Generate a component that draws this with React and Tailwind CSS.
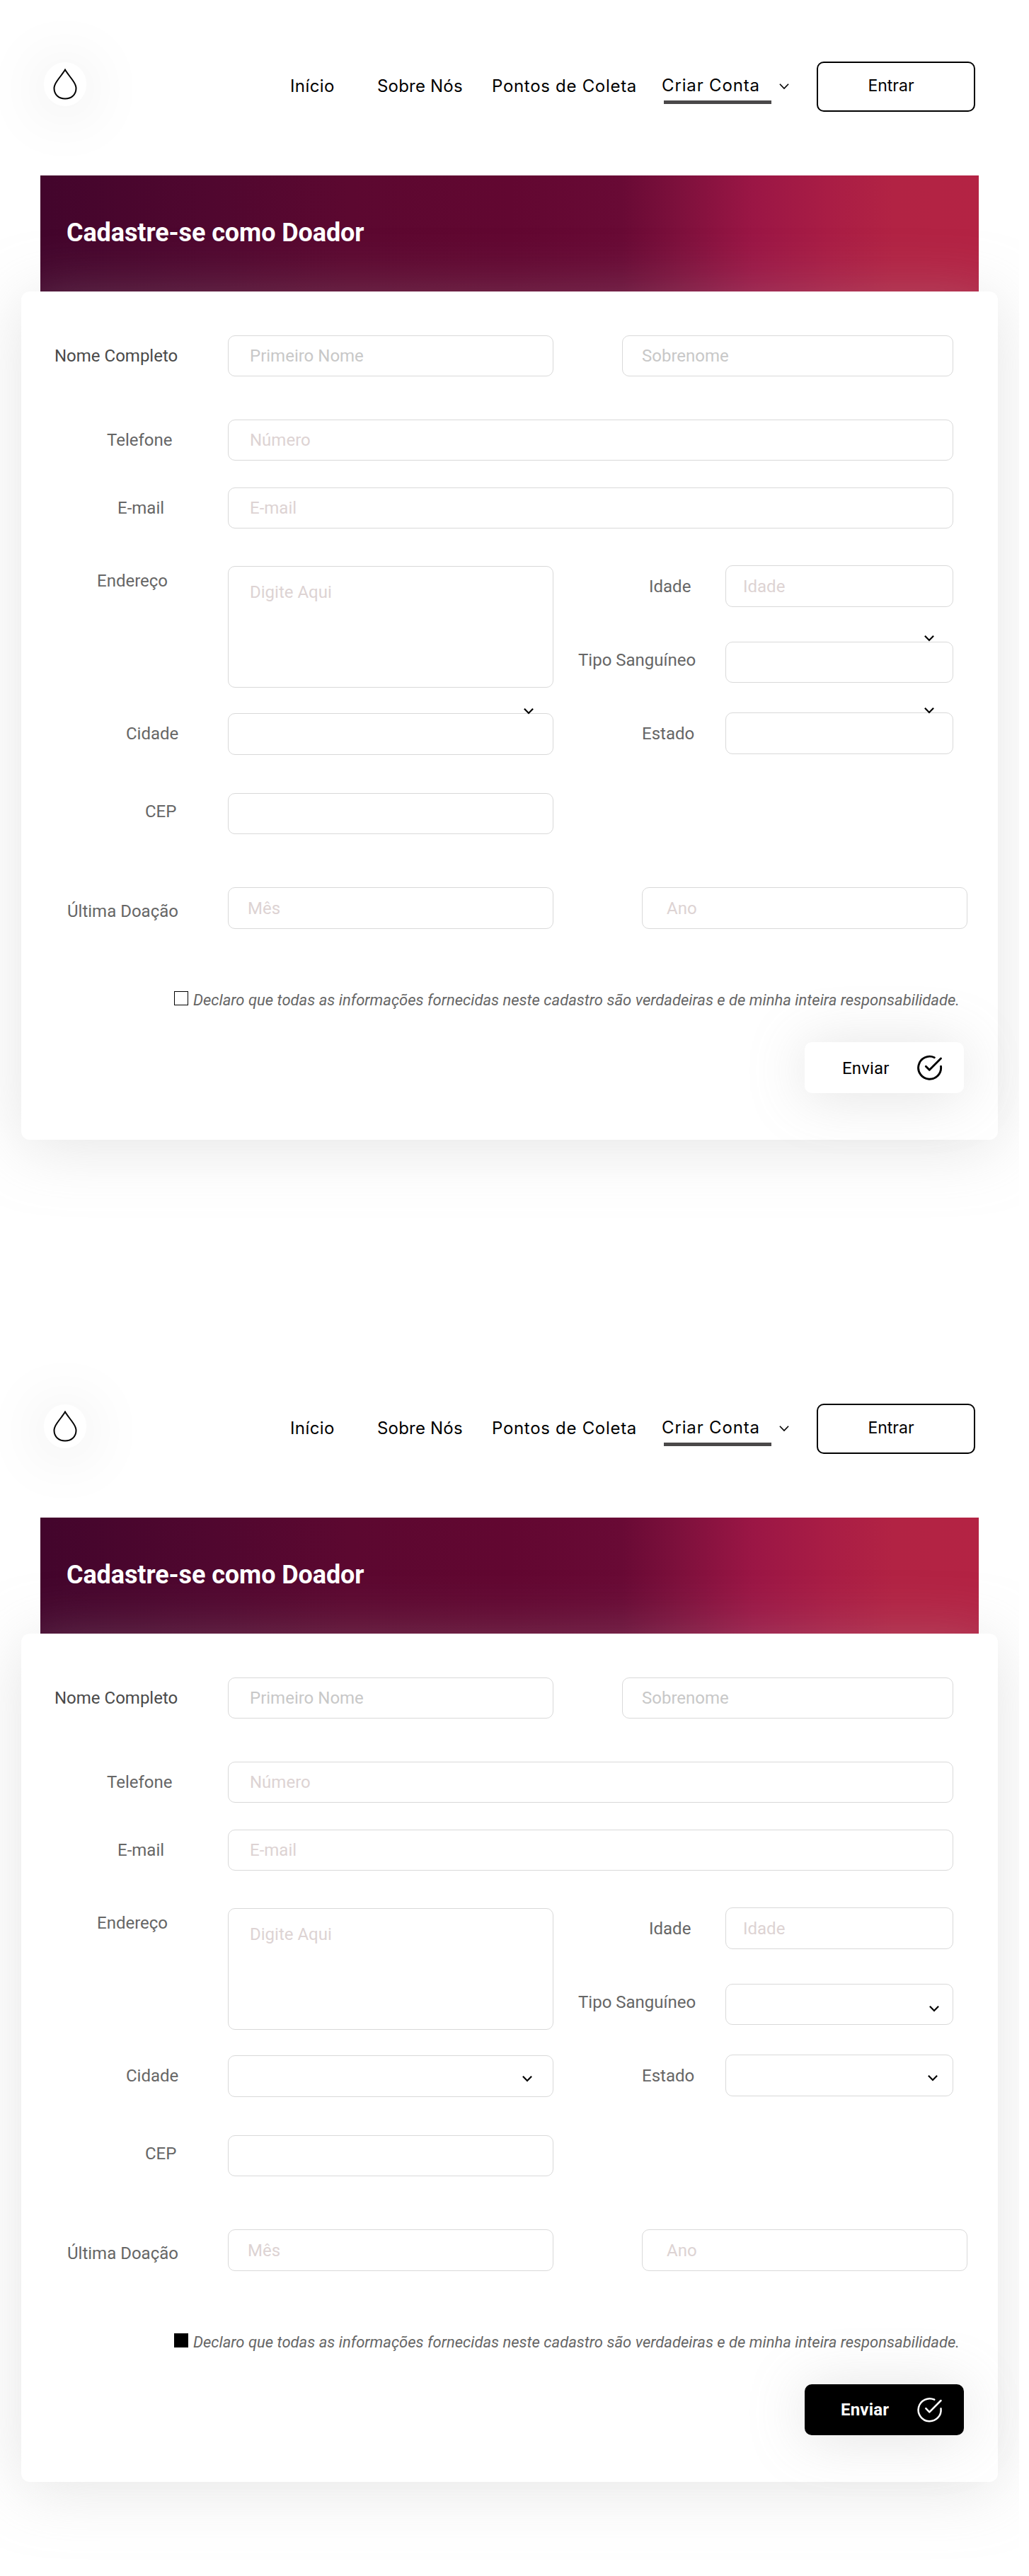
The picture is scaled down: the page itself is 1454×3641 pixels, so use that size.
const ROBOTO = "font-['Roboto',sans-serif]";

function Chevron({ className = "", width = 2.2 }) {
  return (
    <svg className={className} width="14" height="9" viewBox="0 0 14 9" fill="none" stroke="#000" strokeWidth={width}>
      <path d="M0.900 0.800L7 7L13.100 0.800" />
    </svg>
  );
}

function NavLink({ children, className }) {
  return <a className={`block whitespace-nowrap text-[24px] leading-[28px] text-black ${className}`}>{children}</a>;
}

function Header() {
  return (
    <header className="flex h-[248px] items-start font-['Inter',sans-serif]">
      <div className="mt-[88px] ml-[62px] flex h-[62px] w-[60px] shrink-0 items-center justify-center rounded-full bg-white shadow-[0_6px_90px_rgba(0,0,0,0.13)]">
        <svg width="34" height="44" viewBox="0 0 34 44" fill="none" stroke="#000" strokeWidth="2">
          <path d="M17 1.6C14.6 6 10 11 5.6 17.500C2.800 21.500 1.500 24 1.500 28C1.500 36.500 8 42.500 17 42.500S32.500 36.500 32.500 28C32.500 24 31.200 21.500 28.400 17.500C24 11 19.400 6 17 1.600Z" />
        </svg>
      </div>
      <nav className="flex items-start">
        <NavLink className="mt-[108px] ml-[288px] w-[123px] tracking-[0.4px]">Início</NavLink>
        <NavLink className="mt-[108px] w-[162px] tracking-[0.2px]">Sobre Nós</NavLink>
        <NavLink className="mt-[108px] w-[240px] tracking-[0.7px]">Pontos de Coleta</NavLink>
        <div className="mt-[107px] w-[155px]">
          <NavLink className="tracking-[0.85px]">Criar Conta</NavLink>
          <div className="mt-[7px] ml-[3px] h-[5px] w-[152px] bg-[#4a4849]" />
        </div>
        <Chevron className="mt-[118px] ml-[11px]" width={1.6} />
      </nav>
      <a className="mt-[87px] ml-[39px] flex h-[71px] w-[224px] shrink-0 justify-center rounded-[10px] border-2 border-black pt-[18px] text-[23px] leading-[28px] text-black">
        <span className="-ml-[14px]">Entrar</span>
      </a>
    </header>
  );
}

function Label({ children, className = "", tone = "text-[#666666]" }) {
  return (
    <label className={`block shrink-0 whitespace-nowrap text-[24px] leading-[28px] ${tone} ${className}`}>{children}</label>
  );
}

function Field({ children, className = "", tone = "text-[#ddd3d3]" }) {
  return (
    <div className={`relative shrink-0 whitespace-nowrap rounded-[10px] border border-[#d9d9d9] text-[24px] leading-[28px] ${tone} ${className}`}>
      {children}
    </div>
  );
}

function Submit({ filled }) {
  return (
    <button
      className={
        filled
          ? "mt-[47px] ml-[1107px] flex h-[72px] w-[225px] rounded-[10px] bg-black pl-[51px] font-bold text-white shadow-[0_4px_80px_rgba(150,150,150,0.28)]"
          : "mt-[47px] ml-[1107px] flex h-[72px] w-[225px] rounded-[10px] bg-white pl-[53px] text-black shadow-[0_4px_80px_rgba(150,150,150,0.28)]"
      }
    >
      <span className={filled ? "mt-[22px] block w-[106px] text-left text-[24px] leading-[28px] tracking-[0.2px]" : "mt-[23px] block w-[104px] text-left text-[24px] leading-[28px] tracking-[0.15px]"}>
        Enviar
      </span>
      <svg className="mt-[17px] shrink-0" width="38" height="38" viewBox="0 0 38 38" fill="none" stroke="currentColor" strokeWidth={filled ? 2.5 : 2.9} strokeLinecap="round" strokeLinejoin="round">
        <path d="M26.300 4.700A16 16 0 1 0 35.500 17.300" />
        <path d="M14.300 17.200L19.300 22.300L35.500 6" />
      </svg>
    </button>
  );
}

function SignupForm({ filled }) {
  return (
    <form className={`ml-[30px] flex h-[1199px] w-[1380px] flex-col rounded-[12px] bg-white shadow-[0_10px_90px_rgba(180,180,180,0.34)] ${ROBOTO}`}>
      <div className="mt-[62px] flex items-start">
        <Label className="mt-[15px] w-[292px] pl-[47px]" tone="text-[#4a4a4a]">Nome Completo</Label>
        <Field className="h-[58px] w-[460px] pt-[14px] pl-[30px]" tone="text-[#c8c8c8]">Primeiro Nome</Field>
        <Field className="ml-[97px] h-[58px] w-[468px] pt-[14px] pl-[27px]" tone="text-[#c8c8c8]">Sobrenome</Field>
      </div>
      <div className="mt-[61px] flex items-start">
        <Label className="mt-[15px] w-[292px] pl-[121px]">Telefone</Label>
        <Field className="h-[58px] w-[1025px] pt-[14px] pl-[30px]">Número</Field>
      </div>
      <div className="mt-[38px] flex items-start">
        <Label className="mt-[15px] w-[292px] pl-[136px]">E-mail</Label>
        <Field className="h-[58px] w-[1025px] pt-[14px] pl-[30px]">E-mail</Field>
      </div>
      <div className="mt-[52px] flex items-start">
        <div className="w-[752px]">
          <div className="mt-[1px] flex items-start">
            <Label className="mt-[7px] w-[292px] pl-[107px]">Endereço</Label>
            <Field className="h-[172px] w-[460px] pt-[22px] pl-[30px]">Digite Aqui</Field>
          </div>
          <div className="mt-[36px] flex items-start">
            <Label className="mt-[15px] w-[292px] pl-[148px]">Cidade</Label>
            <Field className="h-[59px] w-[460px]">
              <Chevron className={filled ? "absolute top-[28px] left-[415px]" : "absolute -top-[8px] left-[417px]"} />
            </Field>
          </div>
          <div className="mt-[54px] flex items-start">
            <Label className="mt-[12px] w-[292px] pl-[175px]">CEP</Label>
            <Field className="h-[58px] w-[460px]" />
          </div>
        </div>
        <div className="w-[565px]">
          <div className="flex items-start">
            <Label className="mt-[16px] w-[243px] pl-[135px]">Idade</Label>
            <Field className="h-[59px] w-[322px] pt-[15px] pl-[24px]">Idade</Field>
          </div>
          <div className="mt-[49px] flex items-start">
            <Label className="mt-[12px] w-[243px] pl-[35px]">Tipo Sanguíneo</Label>
            <Field className="h-[58px] w-[322px]">
              <Chevron className={filled ? "absolute top-[30px] left-[287px]" : "absolute -top-[10px] left-[280px]"} />
            </Field>
          </div>
          <div className="mt-[42px] flex items-start">
            <Label className="mt-[16px] w-[243px] pl-[125px]">Estado</Label>
            <Field className="h-[59px] w-[322px]">
              <Chevron className={filled ? "absolute top-[28px] left-[285px]" : "absolute -top-[8px] left-[280px]"} />
            </Field>
          </div>
        </div>
      </div>
      <div className="mt-[75px] flex items-start">
        <Label className="mt-[20px] w-[292px] pl-[65px]">Última Doação</Label>
        <Field className="h-[59px] w-[460px] pt-[15px] pl-[27px]">Mês</Field>
        <Field className="ml-[125px] h-[59px] w-[460px] pt-[15px] pl-[34px]">Ano</Field>
      </div>
      <div className="mt-[88px] flex items-start">
        <span className={filled ? "ml-[216px] h-[20px] w-[20px] shrink-0 bg-black" : "ml-[216px] h-[20px] w-[20px] shrink-0 border border-black"} />
        <span className="ml-[7px] h-[25px] whitespace-nowrap text-[22px] leading-[26px] tracking-[0.01px] text-[#666666] italic">
          Declaro que todas as informações fornecidas neste cadastro são verdadeiras e de minha inteira responsabilidade.
        </span>
      </div>
      <Submit filled={filled} />
    </form>
  );
}

function Screen({ filled = false, className }) {
  return (
    <section className={`w-[1440px] overflow-hidden bg-white ${className}`}>
      <Header />
      <div className="ml-[57px] h-[164px] w-[1326px] bg-[linear-gradient(90deg,#43052c_0%,#50072f_18%,#5c0830_33%,#620731_50%,#690a35_62%,#7d103c_68%,#9b1645_76%,#a91d45_84%,#b22344_91%,#b42344_100%)] pt-[60px] pl-[37px]">
        <h1 className={`whitespace-nowrap text-[36px] leading-[42px] font-bold tracking-[-0.1px] text-white ${ROBOTO}`}>Cadastre-se como Doador</h1>
      </div>
      <SignupForm filled={filled} />
    </section>
  );
}

export default function App() {
  return (
    <div className="w-[1454px] bg-white">
      <Screen className="h-[1897px]" />
      <Screen filled className="h-[1744px]" />
    </div>
  );
}
